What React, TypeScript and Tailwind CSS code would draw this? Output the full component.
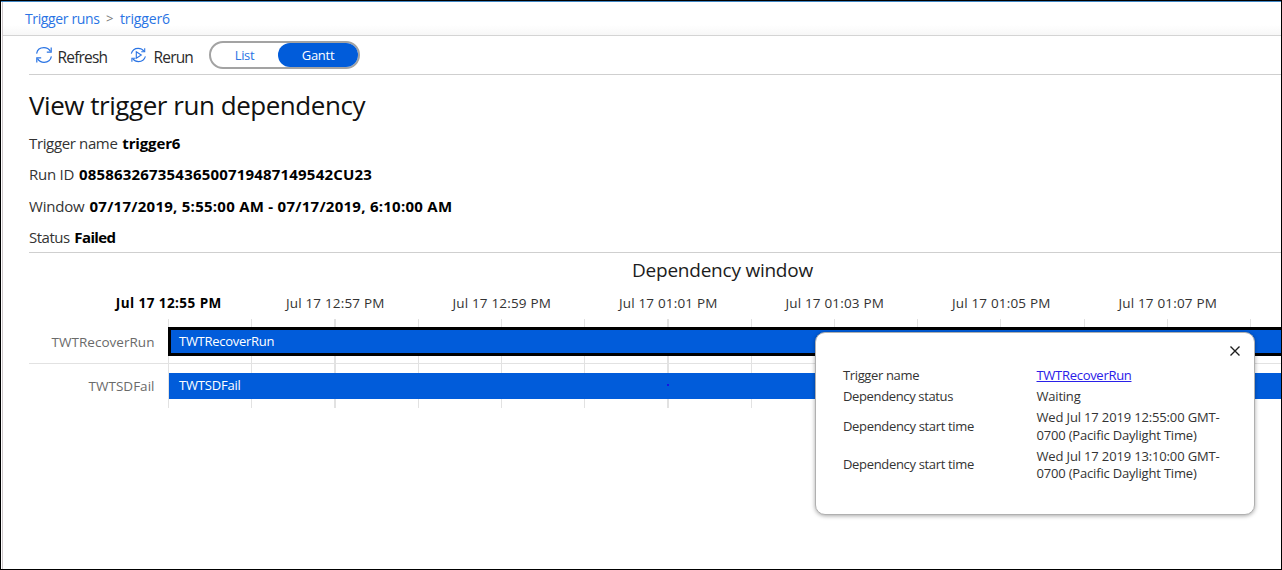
import type { ReactNode } from "react";

const ticks = [
  { label: "Jul 17 12:55 PM", strong: true },
  { label: "Jul 17 12:57 PM" },
  { label: "Jul 17 12:59 PM" },
  { label: "Jul 17 01:01 PM" },
  { label: "Jul 17 01:03 PM" },
  { label: "Jul 17 01:05 PM" },
  { label: "Jul 17 01:07 PM" },
];

function RefreshIcon() {
  return (
    <svg width="18" height="18" viewBox="0 0 18 18" fill="none" stroke="#2a74e4" strokeWidth="1.2">
      <path d="M1.6 7.6C2.3 4 5.3 1.7 8.9 1.7c2.8 0 5.2 1.4 6.6 3.7" />
      <path d="M16.2 1.6v4.6h-4.4" />
      <path d="M16.4 10.4c-.7 3.6-3.7 5.9-7.3 5.9-2.8 0-5.2-1.4-6.6-3.7" />
      <path d="M1.8 16.4v-4.6h4.4" />
    </svg>
  );
}

function RerunIcon() {
  return (
    <svg width="17" height="17" viewBox="0 0 17 17" fill="none" stroke="#2a74e4" strokeWidth="1.1">
      <path d="M1.3 6.6C2.2 3.4 4.8 1.4 8.2 1.4c2.3 0 4.4 1 5.7 2.7" />
      <path d="M14.7 1.2v3.6h-3.5" />
      <path d="M15.4 9.4c-.9 3.2-3.6 5.2-6.9 5.2-2.3 0-4.4-1-5.7-2.7" />
      <path d="M1.9 14.8v-3.6h3.5" />
      <path d="M6.3 4.8v6.4l5-3.2z" />
    </svg>
  );
}

function Info({ label, children }: { label: ReactNode; children: ReactNode }) {
  return (
    <div className="flex h-[31.3px] items-center pt-[1.5px] whitespace-pre text-[15px] text-[#333]">
      {label}
      <b className="ml-[1.3px] font-bold text-black">{children}</b>
    </div>
  );
}

function Toolbar() {
  return (
    <div className="ml-[26px] flex h-[39px] items-center border-b border-[#cfcfcf] text-[15.5px] text-[#2b2b2b]">
      <div className="flex w-[94px] items-center pl-[6px]">
        <RefreshIcon />
        <span className="ml-[4.5px] pt-[3px] leading-5 tracking-[-0.82px]">Refresh</span>
      </div>
      <div className="flex w-[86px] items-center pl-[7px]">
        <RerunIcon />
        <span className="ml-[6.5px] pt-[3px] leading-5 tracking-[-0.82px]">Rerun</span>
      </div>
      <div className="flex h-[28px] w-[151px] items-center rounded-full border-2 border-[#a3a3a3] text-[13px]">
        <span className="flex h-full w-[67px] items-center justify-center pt-[2px] tracking-[-0.35px] text-[#2a74e4]">List</span>
        <span className="flex h-[24px] w-[80px] items-center justify-center rounded-full bg-[#015cda] pt-[2px] tracking-[-0.28px] text-white">
          Gantt
        </span>
      </div>
    </div>
  );
}

function Timeline() {
  return (
    <div className="ml-[26px] flex-1 overflow-hidden">
      <div className="flex h-[36px] items-center justify-center pb-[2px] pl-[135px] text-[19px] tracking-[-0.23px] text-[#1c1c1c]">
        <span>Dependency window</span>
      </div>
      <div className="ml-[56.5px] flex h-[30px] pt-[4px] text-[13.5px] text-[#333]">
        {ticks.map((t) => (
          <span
            key={t.label}
            className={
              t.strong
                ? "w-[166.5px] shrink-0 text-center font-bold tracking-[0.44px] text-black"
                : "w-[166.5px] shrink-0 text-center tracking-[0.17px]"
            }
          >
            {t.label}
          </span>
        ))}
      </div>
      <div className="h-[89px] bg-[repeating-linear-gradient(to_right,#e2e2e2_0px,#e2e2e2_1px,transparent_1px,transparent_83.25px)] bg-[position:139px_0] bg-no-repeat text-[13.5px] text-[#6a6a6a]">
        <div className="flex h-[45px] border-b border-[#e2e2e2] pt-[8px]">
          <span className="flex h-[29px] w-[139px] items-center justify-end pr-[13.5px] tracking-[0.03px]">TWTRecoverRun</span>
          <div className="flex h-[28.5px] flex-1 items-center border-y-[3px] border-l-[3px] border-black bg-[#015cda] pl-[8px] text-[13px] tracking-[-0.28px] text-white">
            TWTRecoverRun
          </div>
        </div>
        <div className="flex h-[36px] pt-[9px]">
          <span className="flex h-[26px] w-[139px] items-center justify-end pr-[13.5px] tracking-[0.02px]">TWTSDFail</span>
          <div className="ml-px flex h-[26px] flex-1 items-center bg-[#015cda] pl-[10px] text-[13px] text-white">
            <span className="w-[488px] tracking-[-0.2px]">TWTSDFail</span>
            <span className="mb-[2px] size-[2px] bg-[#1414e6]" />
          </div>
        </div>
      </div>
    </div>
  );
}

function Details() {
  return (
    <div className="absolute top-[331px] left-[814px] h-[183px] w-[440px] rounded-[10px] border-[1.5px] border-[#b0b0b0] bg-white pt-[34px] pl-[27px] text-[13px] leading-[17.5px] text-[#333] shadow-[0_1px_4px_rgba(0,0,0,0.35)]">
      <svg className="absolute top-[12px] right-[13px]" width="12" height="12" viewBox="0 0 12 12" stroke="#1f1f1f" strokeWidth="1.4">
        <path d="M1.5 1.5l9 9M10.5 1.5l-9 9" />
      </svg>
      <div className="grid grid-cols-[193.5px_200px] items-center gap-y-[3.5px]">
        <span className="tracking-[-0.36px]">Trigger name</span>
        <a className="tracking-[-0.29px] text-[#2a20e8] underline">TWTRecoverRun</a>
        <span className="tracking-[-0.36px]">Dependency status</span>
        <span className="tracking-[-0.21px]">Waiting</span>
        <span className="tracking-[-0.33px]">Dependency start time</span>
        <span>
          <span className="block tracking-[-0.15px]">Wed Jul 17 2019 12:55:00 GMT-</span>
          <span className="block tracking-[-0.18px]">0700 (Pacific Daylight Time)</span>
        </span>
        <span className="tracking-[-0.33px]">Dependency start time</span>
        <span>
          <span className="block tracking-[-0.15px]">Wed Jul 17 2019 13:10:00 GMT-</span>
          <span className="block tracking-[-0.18px]">0700 (Pacific Daylight Time)</span>
        </span>
      </div>
    </div>
  );
}

export default function App() {
  return (
    <div className="relative flex h-[570px] w-[1282px] overflow-hidden border border-black bg-white font-['Open_Sans','Noto_Sans',sans-serif]">
      <div className="flex flex-1 flex-col overflow-hidden border-t border-t-[#3f86c4] pl-px">
        <div className="flex flex-1 flex-col overflow-hidden border-l border-[#cfc8cb]">
          <div className="flex h-[34px] shrink-0 items-center border-b border-[#d4d4d4] bg-linear-to-b from-white from-70% to-[#f7f7f7] pl-[22px] text-[14px] whitespace-pre text-[#2a74e4]">
            <span className="tracking-[-0.37px]">Trigger runs</span>
            <span className="mx-[6.5px] text-[13px] text-[#777]">&gt;</span>
            <span className="tracking-[-0.13px]">trigger6</span>
          </div>
          <Toolbar />
          <div className="ml-[26px] border-b border-[#cfcfcf]">
            <h1 className="flex h-[52px] items-center pt-[8px] text-[26px] tracking-[-0.46px] text-[#111]">
              View trigger run dependency
            </h1>
            <Info label={<span className="tracking-[-0.36px]">Trigger name </span>}>
              <span className="tracking-[-0.14px]">trigger6</span>
            </Info>
            <Info label={<span className="tracking-[-0.27px]">Run ID </span>}>
              <span className="tracking-[0.19px]">08586326735436500719487149542CU23</span>
            </Info>
            <Info label={<span className="tracking-[-0.2px]">Window </span>}>
              <span className="tracking-[0.26px]">07/17/2019, 5:55:00 AM - 07/17/2019, 6:10:00 AM</span>
            </Info>
            <Info label={<span className="tracking-[-0.5px]">Status </span>}>
              <span className="tracking-[-0.6px]">Failed</span>
            </Info>
          </div>
          <Timeline />
        </div>
      </div>
      <Details />
    </div>
  );
}
